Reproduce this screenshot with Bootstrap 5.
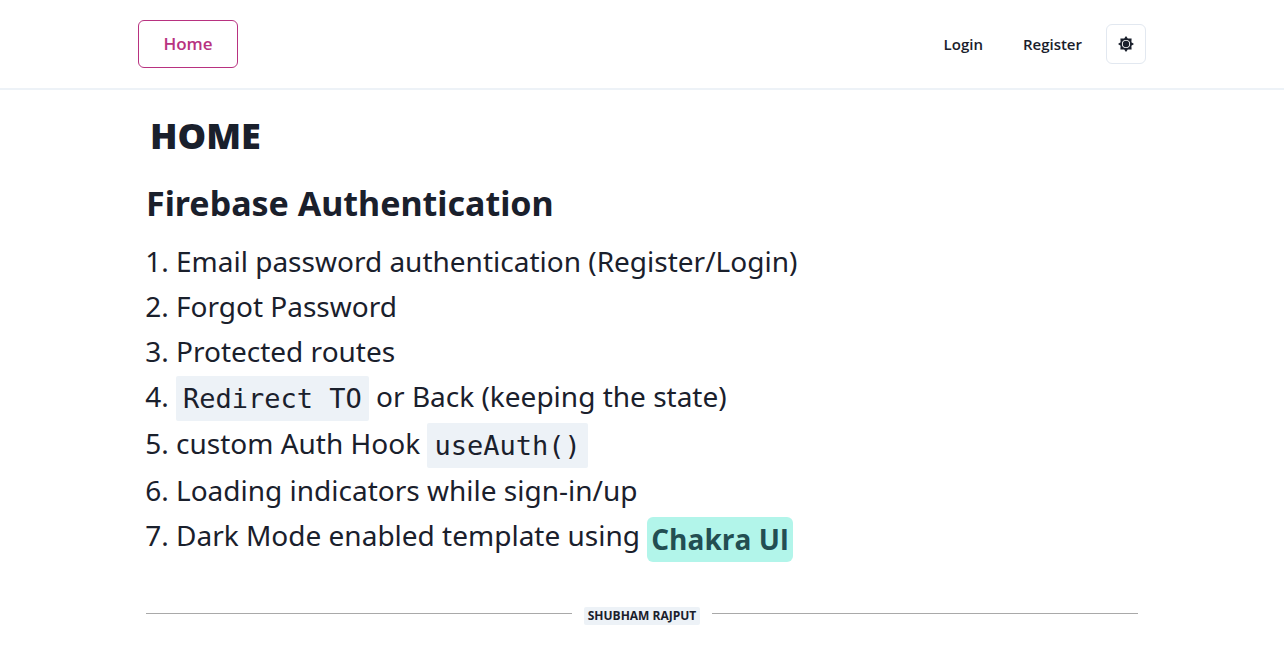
<!DOCTYPE html>
<html lang="en">
<head>
<meta charset="utf-8">
<meta name="viewport" content="width=device-width, initial-scale=1">
<title>Home</title>
<link href="https://cdn.jsdelivr.net/npm/bootstrap@5.3.0/dist/css/bootstrap.min.css" rel="stylesheet">
<style>
body { font-family: "Open Sans", "Noto Sans", sans-serif; color: #1a202c; background: #fff; }
.page-width { max-width: 1008px; }
.top-bar { border-bottom: 2px solid #edf2f7; padding: 20px 0; }
.btn-home { --bs-btn-color: #b83280; --bs-btn-border-color: #b83280; --bs-btn-hover-bg: #fff5f7; --bs-btn-hover-color: #b83280; min-width: 100px; height: 48px; font-size: 17px; font-weight: 600; border-radius: 6px; }
.btn-plain { padding: 8px 15px; font-size: 15px; line-height: 24px; font-weight: 600; color: #1a202c; }
.btn-theme { width: 40px; height: 40px; border-color: #e2e8f0; border-radius: 6px; color: #1a202c; }
.page-title { font-size: 36px; font-weight: 800; line-height: 44px; padding-left: 4px; }
.section-title { font-family: "Noto Sans", sans-serif; font-size: 34px; font-weight: 700; line-height: 44px; margin: 23px 0 14px; }
.features { font-family: "Noto Sans", sans-serif; font-size: 28px; line-height: 45px; padding-left: 30px; }
.features code { font-family: "DejaVu Sans Mono", monospace; font-size: 27px; color: inherit; background: #edf2f7; padding: 0 7px; border-radius: 2px; display: inline-block; vertical-align: -1px; }
.chakra { font-family: "Open Sans", sans-serif; background: #b2f5ea; color: #234e52; font-weight: 700; border-radius: 6px; padding: 0 4px; display: inline-block; vertical-align: -4px; }
.rule { height: 1px; background: #a9a9a9; margin-top: 6px; }
.author { background: #edf2f7; font-size: 12px; font-weight: 700; line-height: 18px; padding: 0 4px; border-radius: 2px; }
.page-foot { margin-top: 45px; gap: 12px; }
</style>
</head>
<body>
<header class="top-bar">
<nav class="page-width mx-auto d-flex align-items-center justify-content-between">
<a class="btn btn-home d-flex align-items-center justify-content-center" href="#">Home</a>
<div class="d-flex align-items-center gap-2">
<a class="btn btn-plain" href="#">Login</a>
<a class="btn btn-plain" href="#">Register</a>
<button class="btn btn-theme d-flex align-items-center justify-content-center p-0" type="button" aria-label="Toggle theme">
<svg width="16" height="16" viewBox="0 0 16 16" aria-hidden="true">
<path fill="currentColor" fill-rule="evenodd" d="M8 0 9.8 2.6 13.6 2.4 13.4 6.2 16 8 13.4 9.8 13.6 13.6 9.8 13.4 8 16 6.2 13.4 2.4 13.6 2.6 9.8 0 8 2.6 6.2 2.4 2.4 6.2 2.6ZM8 3.9a4.1 4.1 0 1 0 0 8.2 4.1 4.1 0 0 0 0-8.2Z"/>
<circle cx="8" cy="8" r="3.2" fill="currentColor"/>
</svg>
</button>
</div>
</nav>
</header>
<main class="page-width mx-auto px-2 pt-4">
<h1 class="page-title mb-0">HOME</h1>
<h2 class="section-title">Firebase Authentication</h2>
<ol class="features mb-0">
<li>Email password authentication (Register/Login)</li>
<li>Forgot Password</li>
<li>Protected routes</li>
<li><code>Redirect TO</code> or Back (keeping the state)</li>
<li>custom Auth Hook <code>useAuth()</code></li>
<li>Loading indicators while sign-in/up</li>
<li>Dark Mode enabled template using <span class="chakra">Chakra UI</span></li>
</ol>
</main>
<footer class="page-foot page-width mx-auto px-2 d-flex">
<div class="rule flex-grow-1"></div>
<span class="author">SHUBHAM RAJPUT</span>
<div class="rule flex-grow-1"></div>
</footer>
<script src="https://cdn.jsdelivr.net/npm/bootstrap@5.3.0/dist/js/bootstrap.bundle.min.js"></script>
</body>
</html>
